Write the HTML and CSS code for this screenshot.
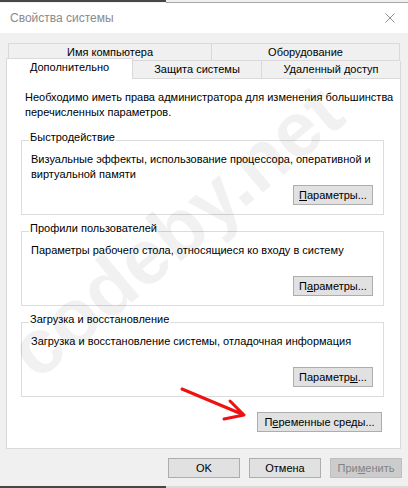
FILE: index.html
```html
<!DOCTYPE html>
<html lang="ru">
<head>
    <meta charset="UTF-8">
    <title>Свойства системы</title>
    <link rel="stylesheet" href="styles.css">
</head>
<body>
    <div class="edge edge-top"><span class="edge-dark"></span><span class="edge-light"></span></div>

    <header class="titlebar">
        <span class="title">Свойства системы</span>
        <svg class="close" width="10" height="10" viewBox="0 0 10 10">
            <path d="M0.5 0.5 L9.5 9.5 M9.5 0.5 L0.5 9.5" stroke="#8f8f8f" stroke-width="1" fill="none"/>
        </svg>
    </header>

    <main class="dialog">
        <div class="tabs">
            <div class="tab-row row-back">
                <div class="tab tab-name">Имя компьютера</div>
                <div class="tab tab-last">Оборудование</div>
            </div>
            <div class="tab-row row-front">
                <div class="tab tab-active">Дополнительно</div>
                <div class="tab tab-protect">Защита системы</div>
                <div class="tab tab-last">Удаленный доступ</div>
            </div>
        </div>

        <section class="panel">
            <p class="note">Необходимо иметь права администратора для изменения большинства перечисленных параметров.</p>

            <fieldset class="group">
                <legend>Быстродействие</legend>
                <p class="desc">Визуальные эффекты, использование процессора, оперативной и виртуальной памяти</p>
                <div class="group-actions"><button class="btn"><u>П</u>араметры...</button></div>
            </fieldset>

            <fieldset class="group">
                <legend>Профили пользователей</legend>
                <p class="desc">Параметры рабочего стола, относящиеся ко входу в систему</p>
                <div class="group-actions"><button class="btn">П<u>а</u>раметры...</button></div>
            </fieldset>

            <fieldset class="group">
                <legend>Загрузка и восстановление</legend>
                <p class="desc">Загрузка и восстановление системы, отладочная информация</p>
                <div class="group-actions"><button class="btn">Параметр<u>ы</u>...</button></div>
            </fieldset>

            <div class="panel-actions">
                <button class="btn btn-env">П<u>е</u>ременные среды...</button>
            </div>
        </section>

        <div class="dialog-actions">
            <button class="btn btn-main">OK</button>
            <button class="btn btn-main">Отмена</button>
            <button class="btn btn-main" disabled>При<u>м</u>енить</button>
        </div>
    </main>

    <div class="edge edge-bottom"><span class="edge-dark"></span><span class="edge-light"></span></div>

    <div class="watermark">codeby.net</div>

    <svg class="arrow" width="408" height="488" viewBox="0 0 408 488">
        <path d="M182 389 L244 415 M230 401 L244 415 L224 419" stroke="#ee1111" stroke-width="3" fill="none" stroke-linecap="round" stroke-linejoin="round"/>
    </svg>
</body>
</html>
```

FILE: styles.css
```css
* {
    box-sizing: border-box;
}

body {
    margin: 0;
    width: 408px;
    height: 488px;
    overflow: hidden;
    position: relative;
    display: flex;
    flex-direction: column;
    background: #f0f0f0;
    font-family: "Liberation Sans", Arial, sans-serif;
    font-size: 11px;
    color: #000;
}

.edge {
    display: flex;
    height: 3px;
}

.edge-dark {
    width: 166px;
    background: #474747;
}

.edge-light {
    flex: 1;
    background: #f0f0f0;
}

.edge-top .edge-dark {
    height: 2px;
}

.edge-top .edge-light {
    background: #fff;
    border-top: 2px solid #f0f0f0;
    border-bottom: 1px solid #a6a6a6;
}

.edge-bottom {
    height: 2px;
}

.edge-bottom .edge-light {
    background: #dadada;
}

.titlebar {
    height: 30px;
    background: #fff;
    display: flex;
    align-items: center;
    justify-content: space-between;
    padding: 0 13px 0 10px;
}

.title {
    font-size: 12px;
    color: #8a8a8a;
}

.dialog {
    flex: 1;
    padding-top: 10px;
    display: flex;
    flex-direction: column;
}

/* tabs */

.tab-row {
    display: flex;
}

.row-back {
    margin: 0 8px;
    height: 18px;
}

.row-front {
    margin-left: 6px;
    margin-right: 7px;
    height: 17px;
    align-items: flex-start;
}

.tab {
    display: flex;
    align-items: center;
    justify-content: center;
    background: #f0f0f0;
    border: 1px solid #d9d9d9;
    border-left: none;
    height: 100%;
}

.row-back .tab {
    padding-bottom: 1px;
}

.row-back .tab-name {
    width: 204px;
    border-left: 1px solid #d9d9d9;
}

.row-front .tab {
    border-top: none;
    border-bottom: none;
    padding-bottom: 1px;
}

.tab-last {
    flex: 1;
}

.row-front .tab-active {
    position: relative;
    z-index: 1;
    width: 127px;
    height: 21px;
    margin-top: -3px;
    background: #fff;
    border: 1px solid #d9d9d9;
    border-bottom: none;
    padding-bottom: 4px;
}

.tab-protect {
    width: 129px;
}

/* panel */

.panel {
    margin-left: 6px;
    width: 395px;
    height: 371px;
    background: #fff;
    border: 1px solid #d9d9d9;
    padding: 11px 16px 0 14px;
    display: flex;
    flex-direction: column;
}

.note {
    margin: 0 -12px 10px 4px;
    line-height: 15px;
}

.group {
    margin: 0 0 6px;
    border: 1px solid #dcdcdc;
    padding: 0 10px 9px 9px;
}

.group legend {
    margin-left: -2px;
    padding: 0 1px 6px;
    line-height: 14px;
}

.desc {
    margin: 2px 0 0;
    line-height: 15px;
    min-height: 30px;
}

.group-actions,
.panel-actions {
    display: flex;
    justify-content: flex-end;
}

.group-actions {
    margin-top: 3px;
}

.panel-actions {
    margin-top: 9px;
    padding-right: 2px;
}

/* buttons */

.btn {
    height: 20px;
    width: 80px;
    padding: 0;
    background: #e1e1e1;
    border: 1px solid #adadad;
    font-family: inherit;
    font-size: 11px;
    color: #000;
}

.btn-env {
    width: 125px;
}

.dialog-actions {
    display: flex;
    justify-content: flex-end;
    gap: 9px;
    padding: 9px 6px 0 0;
}

.btn-main {
    width: 72px;
}

.btn:disabled {
    background: #cccccc;
    border-color: #bfbfbf;
    color: #838383;
}

/* overlays */

.watermark {
    position: absolute;
    left: 20px;
    top: 322px;
    font-size: 78px;
    line-height: 78px;
    font-weight: bold;
    color: rgba(0, 0, 0, 0.055);
    transform: rotate(-40deg);
    transform-origin: left center;
    white-space: nowrap;
    pointer-events: none;
}

.arrow {
    position: absolute;
    left: 0;
    top: 0;
    pointer-events: none;
}
```
